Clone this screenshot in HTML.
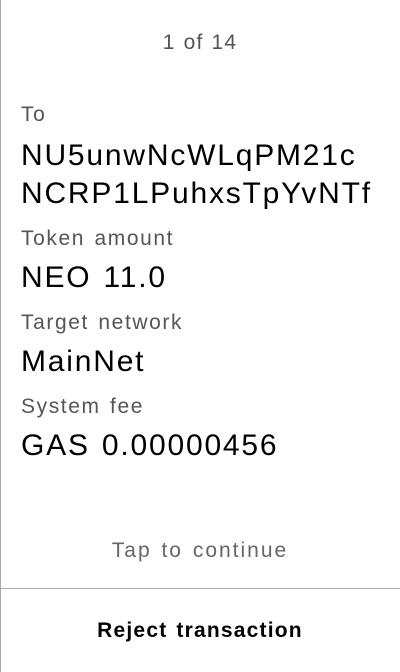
<!DOCTYPE html>
<html><head><meta charset="utf-8"><style>
html,body{margin:0;padding:0;}
body{width:400px;height:672px;position:relative;background:#fff;font-family:"Liberation Sans",sans-serif;overflow:hidden;}
.lb{position:absolute;left:0;top:0;width:1px;height:672px;background:#aaa;}
.hr{position:absolute;left:0;top:588px;width:400px;height:1px;background:#aaa;}
.t{position:absolute;white-space:nowrap;line-height:1;}
.c{left:0;width:400px;text-align:center;}
.lab{left:21px;font-size:21px;color:#555;letter-spacing:1.6px;word-spacing:2px;}
.val{left:21px;font-size:30px;color:#000;letter-spacing:1.8px;word-spacing:2px;}
</style></head><body>
<div class="lb"></div>
<div class="t c" style="top:32px;font-size:21px;color:#555;letter-spacing:1.2px;word-spacing:1px;">1 of 14</div>
<div class="t lab" style="top:104px;">To</div>
<div class="t val" style="top:141px;">NU5unwNcWLqPM21c</div>
<div class="t val" style="top:179px;">NCRP1LPuhxsTpYvNTf</div>
<div class="t lab" style="top:228px;">Token amount</div>
<div class="t val" style="top:263px;">NEO 11.0</div>
<div class="t lab" style="top:312px;">Target network</div>
<div class="t val" style="top:347px;">MainNet</div>
<div class="t lab" style="top:396px;">System fee</div>
<div class="t val" style="top:431px;">GAS 0.00000456</div>
<div class="t c" style="top:540px;font-size:21px;color:#666;letter-spacing:2px;word-spacing:2px;">Tap to continue</div>
<div class="hr"></div>
<div class="t c" style="top:620px;font-size:21px;font-weight:bold;color:#000;letter-spacing:1.2px;word-spacing:2px;">Reject transaction</div>
</body></html>
